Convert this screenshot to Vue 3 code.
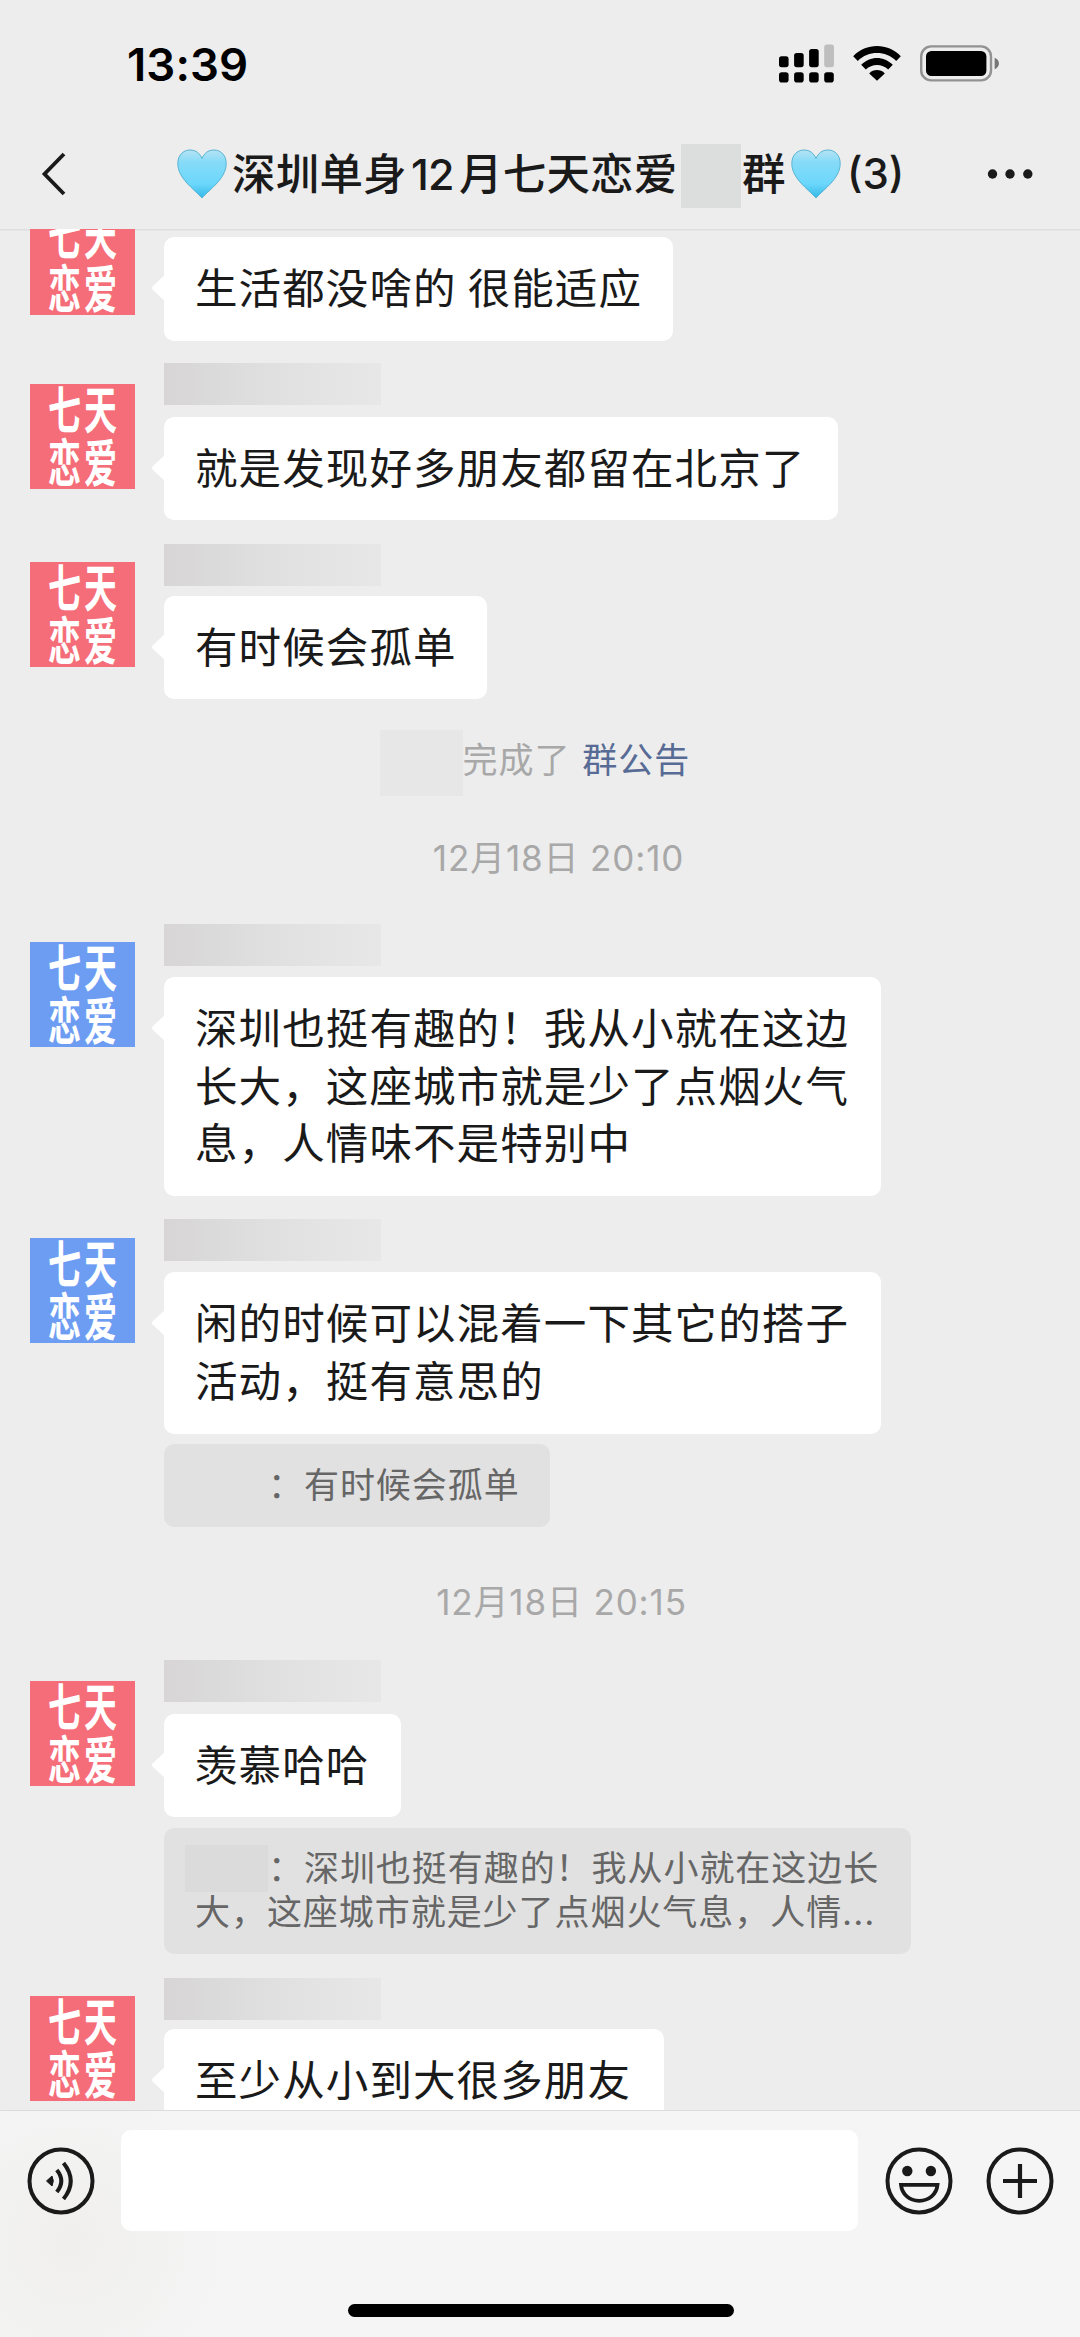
<script setup>
const avatarRows = ['七天', '恋爱']

// gap: distance from the previous row; lift: how far the masked name rises above the avatar
const feed = [
  { kind: 'msg', tone: 'red', gap: -19.5, slot: 27.5, lines: ['生活都没啥的 很能适应'], width: 509, height: 103.5 },
  { kind: 'msg', tone: 'red', gap: 43, slot: 33, lift: 20.5, lines: ['就是发现好多朋友都留在北京了'], width: 674, height: 103.5 },
  { kind: 'msg', tone: 'red', gap: 42, slot: 34, lift: 18, lines: ['有时候会孤单'], width: 323, height: 103 },
  { kind: 'notice', gap: 31 },
  { kind: 'time', gap: 37, shift: 37, text: '12月18日 20:10' },
  { kind: 'msg', tone: 'blue', gap: 59, slot: 34.5, lift: 18, lines: ['深圳也挺有趣的！我从小就在这边', '长大，这座城市就是少了点烟火气', '息，人情味不是特别中'], width: 717, height: 219.5 },
  { kind: 'msg', tone: 'blue', gap: 42, slot: 34, lift: 19, lines: ['闲的时候可以混着一下其它的搭子', '活动，挺有意思的'], width: 717, height: 161.5, quote: { lines: ['：有时候会孤单'], width: 386, height: 83, masked: false } },
  { kind: 'time', gap: 49.5, shift: 43, text: '12月18日 20:15' },
  { kind: 'msg', tone: 'red', gap: 54, slot: 33, lift: 20.5, lines: ['羡慕哈哈'], width: 237, height: 103.5, quote: { lines: ['：深圳也挺有趣的！我从小就在这边长', '大，这座城市就是少了点烟火气息，人情...'], width: 747, height: 126, masked: true } },
  { kind: 'msg', tone: 'red', gap: 42, slot: 33.5, lift: 17.5, lines: ['至少从小到大很多朋友'], width: 500, height: 103.5 },
]

const px = (n) => `${n}px`
</script>

<template>
  <div class="phone">
    <header class="top">
      <div class="status">
        <span class="clock">13:39</span>
        <svg class="status-icons" width="224" height="44" viewBox="776 42 224 44">
          <rect x="778" y="56.3" width="9.6" height="10.9" rx="2.6" />
          <rect x="793.1" y="53" width="9.6" height="14.2" rx="2.6" />
          <rect x="808.1" y="49" width="9.6" height="18.2" rx="2.6" />
          <rect x="823.2" y="44.6" width="9.8" height="22.6" rx="2.6" fill="#bebebe" />
          <rect v-for="x in [778, 793.1, 808.1, 823.2]" :key="x" :x="x" y="72.3" width="9.6" height="10.2" rx="2.8" />
          <path d="M852.2 56.2C865 42.6 887 42.6 899.8 56.2L895.2 61C884.6 50.4 867.4 50.4 856.8 61Z" />
          <path d="M860.2 64.8C869 55.6 883 55.6 891.8 64.8L887.2 69.6C881 63.4 871 63.4 864.8 69.6Z" />
          <path d="M868.2 73.4C872.6 69 879.4 69 883.8 73.4L876 80.8Z" />
          <rect x="920.2" y="46.4" width="69.8" height="34" rx="10" fill="none" stroke="#929292" stroke-width="2.4" />
          <rect x="925" y="51" width="60.4" height="25" rx="5.5" />
          <path d="M993.6 57.8C999.4 59.6 999.4 67.4 993.6 69.2Z" fill="#777" />
        </svg>
      </div>
      <div class="nav">
        <svg class="back" width="30" height="48" viewBox="0 0 30 48">
          <path d="M24 4L4.500 24L24 44" fill="none" stroke="#1a1a1a" stroke-width="3.8" />
        </svg>
        <h1 class="title">
          <svg class="heart" viewBox="0 0 50 50">
            <defs>
              <linearGradient id="heartFill" x1="0" y1="0" x2="0" y2="1">
                <stop offset="0" stop-color="#b5e3f3" />
                <stop offset=".25" stop-color="#86dbf8" />
                <stop offset=".7" stop-color="#6cd7fb" />
                <stop offset="1" stop-color="#35b9e8" />
              </linearGradient>
            </defs>
            <path d="M25 49C17 40 .8 29.500 .8 14.500C.8 6 6.400 1 13 1C19 1 23 4.500 25 9.500C27 4.500 31 1 37 1C43.600 1 49.200 6 49.200 14.500C49.200 29.500 33 40 25 49Z" fill="url(#heartFill)" stroke="#57b4d2" stroke-width="1" />
          </svg>
          <span class="t1">深圳单身</span>
          <span class="t2">12</span>
          <span class="t3">月七天恋爱</span>
          <i class="title-mask"></i>
          <span class="t4">群</span>
          <svg class="heart second" viewBox="0 0 50 50">
            <path d="M25 49C17 40 .8 29.500 .8 14.500C.8 6 6.400 1 13 1C19 1 23 4.500 25 9.500C27 4.500 31 1 37 1C43.600 1 49.200 6 49.200 14.500C49.200 29.500 33 40 25 49Z" fill="url(#heartFill)" stroke="#57b4d2" stroke-width="1" />
          </svg>
          <span class="t5">(3)</span>
        </h1>
        <svg class="more" width="48" height="12" viewBox="0 0 48 12">
          <circle cx="6.500" cy="6" r="4.700" /><circle cx="24" cy="6" r="4.700" /><circle cx="41.800" cy="6" r="4.700" />
        </svg>
      </div>
    </header>

    <main class="chat">
      <template v-for="(item, i) in feed" :key="i">
        <section v-if="item.kind === 'msg'" class="row" :style="{ marginTop: px(item.gap) }">
          <div class="avatar" :class="item.tone">
            <div class="avatar-text">
              <span v-for="r in avatarRows" :key="r">{{ r }}</span>
            </div>
          </div>
          <div class="body">
            <div class="slot" :style="{ height: px(item.slot) }">
              <i v-if="item.lift" class="name-mask" :style="{ marginTop: px(-item.lift) }"></i>
            </div>
            <div class="bubble" :style="{ width: px(item.width), height: px(item.height) }">
              <svg class="tail" width="15" height="30" viewBox="0 0 15 30"><path d="M15 1L2 13Q0 15 2 17L15 29Z" fill="#fff" /></svg>
              <p v-for="l in item.lines" :key="l">{{ l }}</p>
            </div>
            <div v-if="item.quote" class="quote" :style="{ width: px(item.quote.width), height: px(item.quote.height) }">
              <p v-for="(l, n) in item.quote.lines" :key="l">
                <i v-if="n === 0" class="quote-mask" :class="{ visible: item.quote.masked }"></i>{{ l }}
              </p>
            </div>
          </div>
        </section>
        <div v-else-if="item.kind === 'notice'" class="notice" :style="{ marginTop: px(item.gap) }">
          <i class="notice-mask"></i><span>完成了</span><a>群公告</a>
        </div>
        <div v-else class="time" :style="{ marginTop: px(item.gap), paddingLeft: px(item.shift) }">{{ item.text }}</div>
      </template>
    </main>

    <footer class="composer">
      <div class="tools">
        <svg class="voice" width="68" height="68" viewBox="-34 -34 68 68">
          <circle r="31.500" fill="none" stroke="#1a1a1a" stroke-width="4" />
          <path d="M-14.500 0L-9 -5Q-6.500 0 -9 5Z" fill="#1a1a1a" stroke="#1a1a1a" stroke-width="1" />
          <path d="M-4.200 -11Q4.800 0 -4.200 11M2.500 -18Q17 0 2.500 18" fill="none" stroke="#1a1a1a" stroke-width="4" />
        </svg>
        <div class="input"></div>
        <svg class="smile" width="68" height="68" viewBox="-34 -34 68 68">
          <circle r="31.500" fill="none" stroke="#1a1a1a" stroke-width="4" />
          <circle cx="-11.700" cy="-10" r="5.200" fill="#1a1a1a" /><circle cx="11.900" cy="-10" r="5.200" fill="#1a1a1a" />
          <path d="M-18 3.800H18.500C17.500 13.500 10 19.800 .2 19.800S-17 13.500 -18 3.800Z" fill="none" stroke="#1a1a1a" stroke-width="3.800" />
        </svg>
        <svg class="plus" width="68" height="68" viewBox="-34 -34 68 68">
          <circle r="31.500" fill="none" stroke="#1a1a1a" stroke-width="4" />
          <path d="M-17 0H17M0 -17V17" stroke="#1a1a1a" stroke-width="4.200" />
        </svg>
      </div>
      <div class="home"></div>
    </footer>
  </div>
</template>

<style>
body { margin: 0; background: #ededed; }
</style>

<style scoped>
.phone {
  width: 1080px;
  height: 2337px;
  display: flex;
  flex-direction: column;
  overflow: hidden;
  background: #ededed;
  color: #1a1a1a;
  font-family: Inter, "Noto Sans CJK SC", sans-serif;
}
p, h1 { margin: 0; font-weight: inherit; }
i { display: block; flex: none; }
span, a { white-space: nowrap; }

.top { height: 229px; flex: none; display: flex; flex-direction: column; }
.status { height: 119px; flex: none; display: flex; justify-content: space-between; padding: 0 79px 0 127px; }
.clock { margin-top: 37px; font-size: 45.500px; line-height: 56px; font-weight: 600; color: #000; letter-spacing: .1px; }
.status-icons { margin-top: 42px; }
.nav { height: 110px; display: flex; align-items: center; }
.back { margin-left: 40px; flex: none; }
.title { width: 830px; margin-left: 107px; display: flex; align-items: center; flex: none; font-size: 43.500px; line-height: 60px; font-weight: 500; }
.heart { width: 50px; height: 50px; flex: none; }
.t1 { width: 179px; margin-left: 5px; letter-spacing: .2px; }
.t2 { width: 50px; letter-spacing: -.8px; font-size: 43px; }
.t3 { width: 220px; margin-left: -2px; letter-spacing: .2px; }
.title-mask { width: 60px; height: 64px; margin: 4px 0 0 2px; background: #dcdddd; }
.t4 { width: 44px; margin-left: 1px; }
.heart.second { margin-left: 5px; }
.t5 { margin-left: 6px; font-size: 42px; font-weight: 450; }
.more { margin-left: -21px; flex: none; fill: #1a1a1a; }

.chat { height: 1881px; flex: none; overflow: hidden; display: flow-root; box-shadow: inset 0 1.500px #dedede; }
.row { display: flex; padding-left: 29.500px; }
.avatar { width: 105px; height: 105px; flex: none; overflow: hidden; }
.red { background: #f56d78; }
.blue { background: #6d9cf3; }
.avatar-text {
  width: 105px;
  height: 68px;
  display: flex;
  flex-direction: column;
  transform: translateY(-1.500px) scaleY(1.550);
  transform-origin: 0 0;
  color: #fff;
  font: 700 33px/33.500px "Noto Sans CJK SC", sans-serif;
  letter-spacing: 3px;
}
.avatar-text span { margin-left: 18.500px; height: 33.500px; }
.body { margin-left: 29.500px; }
.slot { display: flex; align-items: flex-start; }
.name-mask { width: 217px; height: 42px; background: linear-gradient(90deg, #d7d5d5, #dfdfdf 45%, #e4e4e4 75%, #e7e7e7); }
.bubble {
  position: relative;
  box-sizing: border-box;
  display: flex;
  flex-direction: column;
  justify-content: center;
  padding-left: 31px;
  border-radius: 10px;
  background: #fff;
  font-size: 42.500px;
  line-height: 57.500px;
  letter-spacing: 1.100px;
  word-spacing: -2px;
  white-space: nowrap;
}
.tail { position: absolute; left: -13px; top: 36px; }
.quote {
  box-sizing: border-box;
  display: flex;
  flex-direction: column;
  justify-content: center;
  margin-top: 10.500px;
  padding-left: 31px;
  border-radius: 10px;
  background: #e1e1e1;
  color: #666;
  font-size: 35px;
  line-height: 43.500px;
  letter-spacing: .95px;
  white-space: nowrap;
}
.quote p { display: flex; align-items: center; }
.quote-mask { width: 83px; height: 47px; margin: -2px 0 -2px -10px; }
.quote-mask.visible { background: #dbdbdb; }
.notice { height: 66px; display: flex; align-items: center; padding-left: 380px; font-size: 35px; line-height: 50px; letter-spacing: .95px; color: #a8a8a8; }
.notice-mask { width: 82.500px; height: 66px; background: #e7e7e7; }
.notice span { margin-top: -7px; }
.notice a { margin: -7px 0 0 12px; color: #576b95; }
.time { height: 50px; text-align: center; font-size: 35px; line-height: 50px; letter-spacing: .85px; color: #a8a8a8; }

.composer {
  height: 227px;
  flex: none;
  box-sizing: border-box;
  border-top: 1.500px solid #dcdcdc;
  background: radial-gradient(circle at 70px 130px, #f0efee, #f5f5f5 160px);
}
.tools { height: 139px; display: flex; align-items: center; padding-left: 26.500px; }
.tools svg { flex: none; }
.input { width: 736.500px; height: 101px; margin-left: 26.500px; border-radius: 10px; background: #fff; }
.smile { margin-left: 27px; }
.plus { margin-left: 33px; }
.home { width: 386px; height: 13px; margin: 54px 0 0 347.500px; border-radius: 7px; background: #000; }
</style>
